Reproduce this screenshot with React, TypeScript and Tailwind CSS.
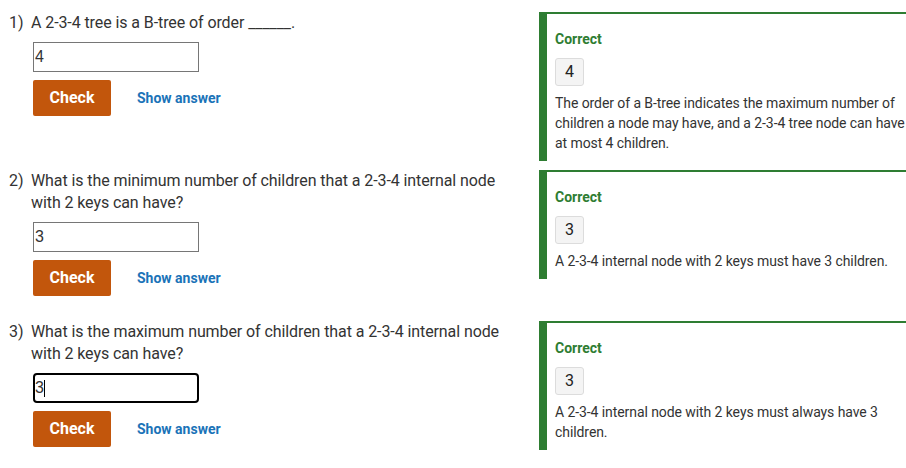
import React from "react";

type Item = {
  n: string;
  q: string;
  value: string;
  focused?: boolean;
  badge: string;
  explain: string;
};

const items: Item[] = [
  {
    n: "1)",
    q: "A 2-3-4 tree is a B-tree of order ______.",
    value: "4",
    badge: "4",
    explain:
      "The order of a B-tree indicates the maximum number of children a node may have, and a 2-3-4 tree node can have at most 4 children.",
  },
  {
    n: "2)",
    q: "What is the minimum number of children that a 2-3-4 internal node with 2 keys can have?",
    value: "3",
    badge: "3",
    explain: "A 2-3-4 internal node with 2 keys must have 3 children.",
  },
  {
    n: "3)",
    q: "What is the maximum number of children that a 2-3-4 internal node with 2 keys can have?",
    value: "3",
    focused: true,
    badge: "3",
    explain: "A 2-3-4 internal node with 2 keys must always have 3 children.",
  },
];

function Row({ item, first }: { item: Item; first: boolean }) {
  return (
    <div className={`flex items-start ${first ? "pt-[12px]" : "pt-[9px]"}`}>
      <div className="w-[539px] shrink-0 pb-[16px]">
        <div className="flex pl-[9px] pr-[25px] text-[16px] leading-[22px] tracking-[-0.09px] text-[#333333]">
          <span className="w-[22px] shrink-0">{item.n}</span>
          <span className="flex-1">{item.q}</span>
        </div>
        <div className="ml-[33px] mt-[8px]">
          {item.focused ? (
            <div className="flex h-[30px] w-[166px] items-center rounded-[4px] border-2 border-black bg-white pl-[0px] text-[16px] text-[#333] font-['Liberation_Sans',sans-serif]">
              <span>{item.value}</span>
              <span className="h-[17px] w-[1px] bg-black" />
            </div>
          ) : (
            <div className="flex h-[30px] w-[166px] items-center border border-[#767676] bg-white pl-[1px] text-[16px] text-[#333] font-['Liberation_Sans',sans-serif]">
              {item.value}
            </div>
          )}
        </div>
        <div className="ml-[33px] mt-[8px] flex items-center">
          <button className="h-[36px] w-[78px] rounded-[2px] bg-[#c2560c] text-[16px] font-bold text-white">
            Check
          </button>
          <span className="ml-[26px] text-[14px] font-bold text-[#1a73b8]">Show answer</span>
        </div>
      </div>
      <div className="flex-1 border-l-8 border-t-2 border-[#2e7d32] pb-[8px] pl-[8px] pt-[15px]">
        <div className="text-[14px] font-bold leading-[20px] text-[#2e7d32]">Correct</div>
        <div className="mt-[9px] flex h-[28px] w-[29px] items-center justify-center rounded-[3px] border border-[#dcdcdc] bg-[#f4f4f4] text-[16px] text-[#222]">
          {item.badge}
        </div>
        <div className="mt-[7px] text-[14px] leading-[20px] tracking-[-0.08px] text-[#333333]">{item.explain}</div>
      </div>
    </div>
  );
}

export default function App() {
  return (
    <div className="h-[468px] w-[906px] overflow-hidden bg-white font-['Roboto',sans-serif]">
      {items.map((it, i) => (
        <Row key={i} item={it} first={i === 0} />
      ))}
    </div>
  );
}
